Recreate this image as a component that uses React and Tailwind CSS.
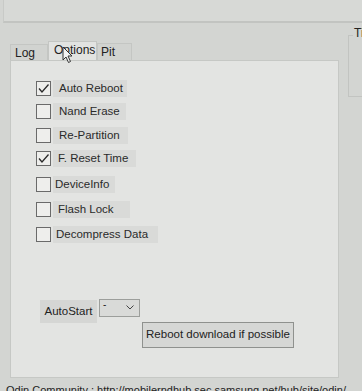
import React from "react";

const options = [
  { label: "Auto Reboot", checked: true, mt: "mt-[19px]", pad: "pl-[6px] pr-[4px]" },
  { label: "Nand Erase", checked: false, mt: "mt-[6px]", pad: "pl-[6px] pr-[6px]" },
  { label: "Re-Partition", checked: false, mt: "mt-[7px]", pad: "pl-[6px] pr-[8px]" },
  { label: "F. Reset Time", checked: true, mt: "mt-[6px]", pad: "pl-[5px] pr-[8px]" },
  { label: "DeviceInfo", checked: false, mt: "mt-[9px]", pad: "pl-[2px] pr-[6px]" },
  { label: "Flash Lock", checked: false, mt: "mt-[8px]", pad: "pl-[5px] pr-[16px]" },
  { label: "Decompress Data", checked: false, mt: "mt-[8px]", pad: "pl-[3px] pr-[10px]" },
];

const CheckRow = ({ label, checked, mt, pad }) => (
  <div className={`flex items-center ${mt}`}>
    <div className="w-[15px] h-[15px] border border-[#6a6a6a] bg-[#eeeeec] flex items-center justify-center">
      {checked && (
        <svg width="13" height="13" viewBox="0 0 13 13">
          <path d="M2 6.5 L5 10 L11.5 2.5" fill="none" stroke="#2a2a2a" strokeWidth="1.3" />
        </svg>
      )}
    </div>
    <div className={`ml-[2px] h-[17px] flex items-center bg-[#d9dad8] text-[11.5px] text-[#2a2a2a] ${pad}`}>
      {label}
    </div>
  </div>
);

export default function App() {
  return (
    <div
      className="w-[362px] h-[391px] overflow-hidden bg-[#d3d5d2] text-[#222]"
      style={{ fontFamily: '"Liberation Sans", Arial, sans-serif' }}
    >
      {/* top strip */}
      <div className="h-[23px] border-b-2 border-[#c2c4c1] bg-[#d7d9d6] ml-[3px] border-l border-l-[#c8cac7]" />

      <div className="flex">
        {/* tabs + page */}
        <div className="ml-[10px] w-[329px] flex flex-col">
          <div className="flex items-end h-[37px] text-[12px]">
            <div className="w-[38px] h-[16px] bg-[#d1d3d0] border border-[#c4c6c3] border-b-0 pl-[4px] leading-[16px]">
              Log
            </div>
            <div className="w-[49px] h-[19px] bg-[#e2e3e1] border border-[#c4c6c3] border-b-0 pl-[5px] leading-[17px] relative">
              Options
              <svg className="absolute left-[13px] top-[4px]" width="12" height="18" viewBox="0 0 12 18">
                <path d="M1 1 L1 14 L4 11 L6.5 16.5 L8.5 15.5 L6 10 L10 10 Z" fill="#f4f4f4" stroke="#333" strokeWidth="1" />
              </svg>
            </div>
            <div className="w-[35px] h-[17px] bg-[#d1d3d0] border border-[#c4c6c3] border-b-0 pl-[3px] leading-[16px]">
              Pit
            </div>
          </div>

          <div className="h-[318px] bg-[#e3e4e2] border border-[#c6c8c5] pl-[25px] flex flex-col">
            {options.map((o) => (
              <CheckRow key={o.label} {...o} />
            ))}

            <div className="flex items-start mt-[57px] ml-[4px]">
              <div className="h-[23px] w-[57px] bg-[#d5d6d4] flex items-center justify-center text-[11.5px]">
                AutoStart
              </div>
              <div className="ml-[2px] -mt-[1px] w-[41px] h-[18px] border border-[#9c9e9b] bg-[#d9dad8] flex items-start justify-between px-[3px]">
                <span className="text-[10px] leading-[10px]">-</span>
                <svg className="mt-[5px] mr-[2px]" width="8" height="5" viewBox="0 0 8 5">
                  <path d="M0.5 0.5 L4 4 L7.5 0.5" fill="none" stroke="#444" strokeWidth="1" />
                </svg>
              </div>
            </div>

            <div className="-mt-[1px] ml-[106px] w-[152px] h-[26px] border border-[#8f918e] bg-[#d6d7d5] flex items-center justify-center text-[11.5px] whitespace-nowrap">
              Reboot download if possible
            </div>
          </div>
        </div>

        {/* right group box */}
        <div className="ml-[9px] flex-1 relative">
          <div className="mt-[12px] h-[62px] border border-[#c2c4c1] border-r-0" />
          <div className="absolute left-[5px] top-[3px] text-[12px] leading-[14px] bg-[#d3d5d2] pl-[1px]">Ti</div>
        </div>
      </div>

      <div className="mt-[4px] pl-[6px] text-[11px] whitespace-nowrap">
        Odin Community : <span className="underline">http://mobilerndhub.sec.samsung.net/hub/site/odin/</span>
      </div>
    </div>
  );
}
